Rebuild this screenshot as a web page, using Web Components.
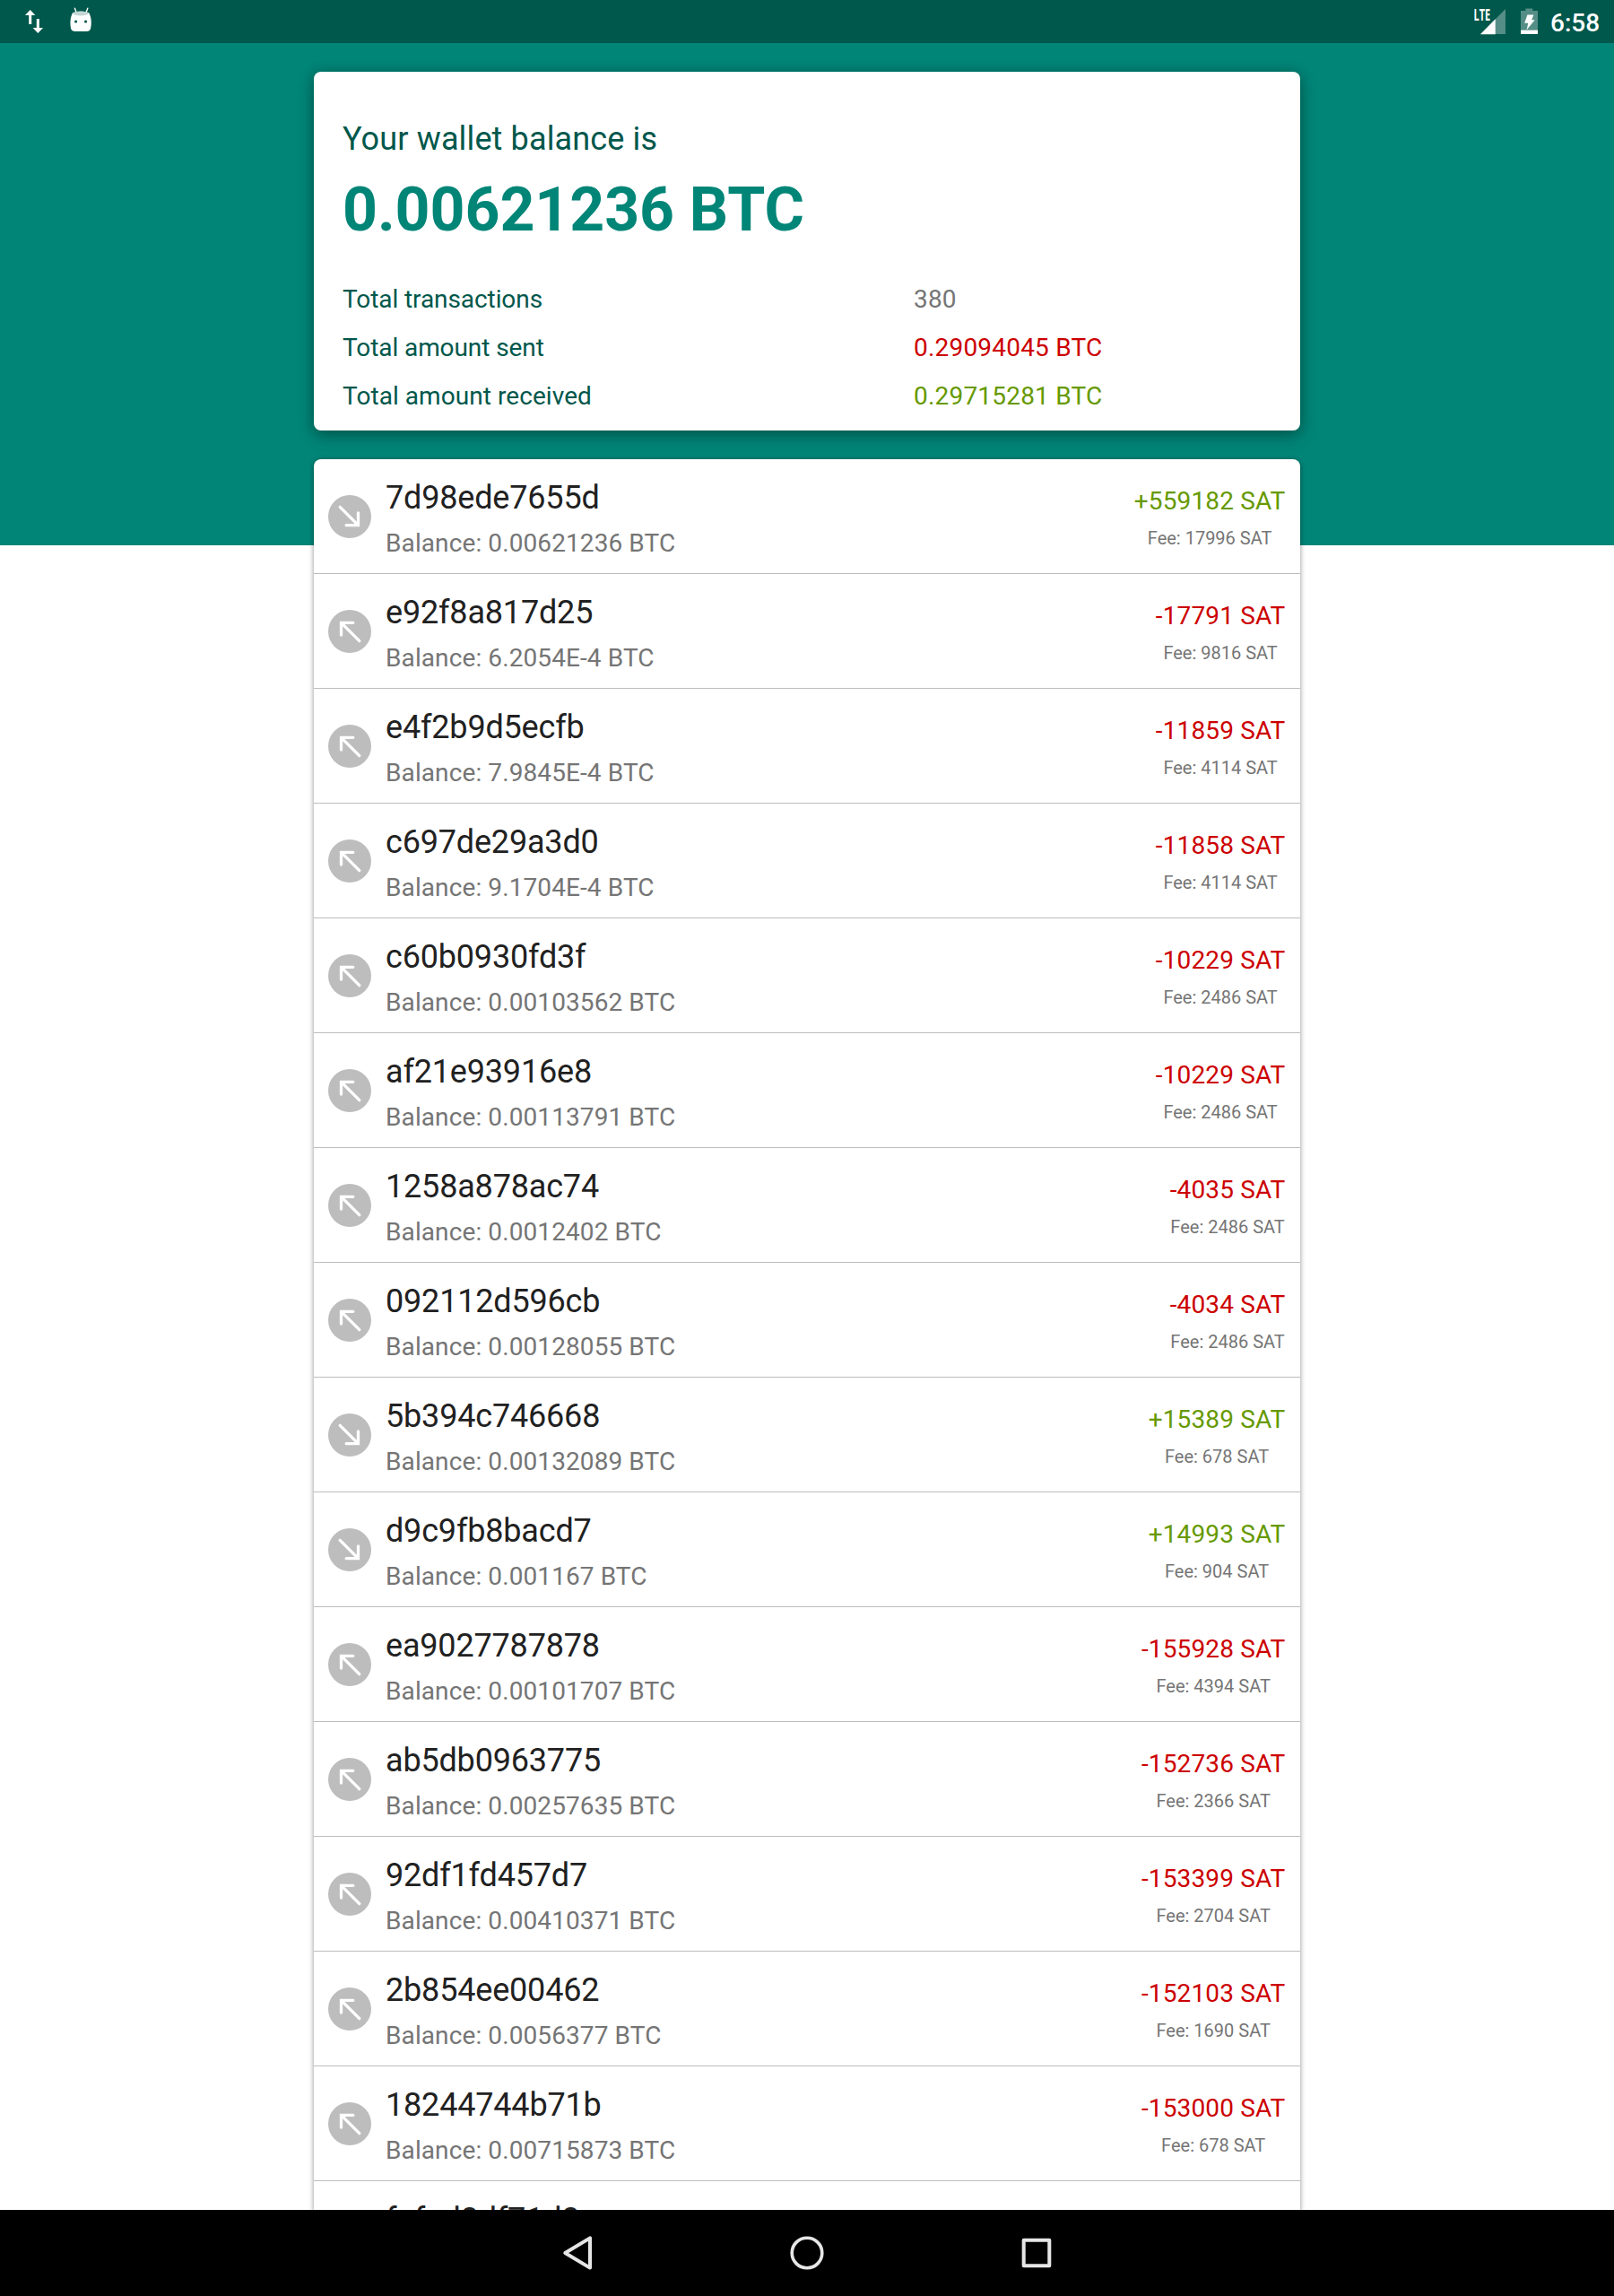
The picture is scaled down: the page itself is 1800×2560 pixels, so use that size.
<!DOCTYPE html>
<html lang="en">
<head>
<meta charset="utf-8">
<title>Wallet</title>
<style>
html,body{margin:0;height:2560px;overflow:hidden;background:#fff;font-family:Roboto,"Liberation Sans",sans-serif}
</style>
</head>
<body>
<wallet-app></wallet-app>
<script>
const define = (name, html, setup) => {
  const tpl = document.createElement('template');
  tpl.innerHTML = html;
  customElements.define(name, class extends HTMLElement {
    connectedCallback() {
      if (this.shadowRoot) return;
      this.attachShadow({mode: 'open'}).append(tpl.content.cloneNode(true));
      if (setup) setup(this, this.shadowRoot);
    }
  });
};

define('status-bar', `<style>
:host{display:flex;align-items:center;justify-content:space-between;height:48px;background:#00574b;color:#fff;flex:none}
svg{display:block;flex:none}
.side{display:flex;height:48px}
.time{font-size:28px;font-weight:500;line-height:48px;width:71px;padding-top:2px;box-sizing:border-box;flex:none}
</style>
<div class="side">
<svg width="140" height="48" viewBox="0 0 140 48" fill="#fff">
<path d="M28 17 L33.7 11 L39.4 17 H35.2 V27 H32.2 V17Z"/>
<path d="M36.6 31 H40.8 V21 H43.8 V31 H48 L42.3 37Z"/>
<path d="M85.4 14.5 L83.4 9.2 M95.8 14.5 L97.8 9.2" stroke="#fff" stroke-width="1.4" stroke-linecap="round"/>
<path d="M81 14.2 Q90 11.5 99.2 14.2 C102.3 20 102.2 27 101 32 Q100.2 35 96.5 35 H84 Q80 35 79.1 32 C78 27 78 20 81 14.2Z"/>
<ellipse cx="90" cy="14.9" rx="8.6" ry="2.5" fill="#c3d6d3"/>
<circle cx="84.6" cy="24" r="1.6" fill="#00574b"/><circle cx="95.6" cy="24" r="1.6" fill="#00574b"/>
</svg>
</div>
<div class="side">
<svg width="89" height="48" viewBox="0 0 89 48">
<text x="3.5" y="22.6" font-family="Open Sans, Roboto, sans-serif" font-size="17" font-weight="700" fill="#fff" textLength="18.5" lengthAdjust="spacingAndGlyphs">LTE</text>
<path d="M39 10 V38 H11Z" fill="#fff" opacity=".33"/>
<path d="M27.7 21.3 V38.3 H11Z" fill="#fff"/>
<path d="M61.3 9.5 h8 v2.6 h5.7 V33.5 H56 V12.1 h5.3Z" fill="#fff" opacity=".33"/>
<path d="M56 33.5 h19 v4.5 h-19Z" fill="#fff"/>
<path d="M63.4 16.5 H70.4 L68.2 22.3 H71.7 L62.5 33.5 L64.3 25.8 H60.2Z" fill="#fff"/>
</svg>
<span class="time">6:58</span>
</div>`);

define('stat-line', `<style>
:host{display:grid;grid-template-columns:637px 1fr;font-size:28px;line-height:33px;color:#00574b;height:33px}
.v{color:#757575;letter-spacing:.2px}
:host([tone]) .v{color:#c00}
:host([tone=received]) .v{color:#690}
</style><span><slot></slot></span><span class="v"></span>`,
(el, root) => root.querySelector('.v').textContent = el.getAttribute('value'));

define('balance-card', `<style>
:host{display:block;box-sizing:border-box;height:400px;background:#fff;border-radius:8px;padding:54px 32px 0;
box-shadow:0 7px 18px rgba(0,0,0,.26),0 0 14px rgba(0,0,0,.2)}
.label{font-size:36px;line-height:42px;color:#00574b;letter-spacing:.14px}
.amount{font-size:68px;line-height:80px;font-weight:700;color:#008577;margin-top:18px;letter-spacing:-.08px}
.stats{display:flex;flex-direction:column;gap:21px;margin-top:43px}
.tight{letter-spacing:-.08px}
.loose{letter-spacing:.06px}
</style>
<div class="label">Your wallet balance is</div>
<div class="amount">0.00621236 BTC</div>
<div class="stats">
<stat-line class="tight" value="380">Total transactions</stat-line>
<stat-line class="tight" value="0.29094045 BTC" tone="sent">Total amount sent</stat-line>
<stat-line class="loose" value="0.29715281 BTC" tone="received">Total amount received</stat-line>
</div>`);

define('direction-icon', `<style>
:host{display:block;width:48px;height:48px;flex:none}
svg{display:block}
:host([out]) g{transform:rotate(180deg);transform-origin:24px 24px}
</style><svg width="48" height="48" viewBox="0 0 48 48"><circle cx="24" cy="24" r="24" fill="#bdbdbd"/>
<g fill="none" stroke="#fff" stroke-width="3.3" stroke-linecap="round" stroke-linejoin="miter"><path d="M13.2 13.3 L33 33.2"/><path d="M20.2 33.7 H33.5 V20"/></g></svg>`);

define('tx-row', `<style>
:host{display:flex;align-items:center;box-sizing:border-box;height:128px;padding:0 16px;border-bottom:1px solid #bdbdbd;gap:16px;flex:none}
.main{flex:1;display:flex;flex-direction:column;gap:13px;padding-top:4px}
.hash{font-size:36px;line-height:42px;color:#212121;letter-spacing:-.18px}
.bal{font-size:28px;line-height:33px;color:#757575;letter-spacing:.1px}
.side{display:flex;flex-direction:column;align-items:center;gap:13px;padding:2px .6px 0 0}
.amt{font-size:28px;line-height:33px;color:#c00;letter-spacing:.14px}
.amt.in{color:#690}
.fee{font-size:20px;line-height:24px;color:#757575}
</style>
<direction-icon></direction-icon>
<div class="main"><div class="hash"></div><div class="bal"></div></div>
<div class="side"><div class="amt"></div><div class="fee"></div></div>`,
(el, root) => {
  const q = s => root.querySelector(s), amt = el.getAttribute('amount');
  q('.hash').textContent = el.getAttribute('hash');
  q('.bal').textContent = 'Balance: ' + el.getAttribute('balance') + ' BTC';
  q('.amt').textContent = amt + ' SAT';
  q('.fee').textContent = 'Fee: ' + el.getAttribute('fee') + ' SAT';
  if (amt[0] === '+') q('.amt').classList.add('in');
  else q('direction-icon').setAttribute('out', '');
});

const transactions = [
  ['7d98ede7655d','0.00621236','+559182','17996'],
  ['e92f8a817d25','6.2054E-4','-17791','9816'],
  ['e4f2b9d5ecfb','7.9845E-4','-11859','4114'],
  ['c697de29a3d0','9.1704E-4','-11858','4114'],
  ['c60b0930fd3f','0.00103562','-10229','2486'],
  ['af21e93916e8','0.00113791','-10229','2486'],
  ['1258a878ac74','0.0012402','-4035','2486'],
  ['092112d596cb','0.00128055','-4034','2486'],
  ['5b394c746668','0.00132089','+15389','678'],
  ['d9c9fb8bacd7','0.001167','+14993','904'],
  ['ea9027787878','0.00101707','-155928','4394'],
  ['ab5db0963775','0.00257635','-152736','2366'],
  ['92df1fd457d7','0.00410371','-153399','2704'],
  ['2b854ee00462','0.0056377','-152103','1690'],
  ['18244744b71b','0.00715873','-153000','678']
];

define('tx-list', `<style>
:host{display:flex;flex-direction:column;background:#fff;border-radius:8px 8px 0 0;flex:1;min-height:0;
box-shadow:0 2px 6px rgba(0,0,0,.32),0 0 4px rgba(0,0,0,.16)}
.rows{display:flex;flex-direction:column;overflow:hidden;border-radius:8px 8px 0 0;height:1952px}
.next{font-size:36px;line-height:42px;color:#212121;padding:21.5px 0 0 80px;flex:none;letter-spacing:-.18px}
</style><div class="rows"></div>`,
(el, root) => {
  const rows = root.querySelector('.rows');
  for (const [hash, balance, amount, fee] of transactions) {
    const r = document.createElement('tx-row');
    Object.entries({hash, balance, amount, fee}).forEach(([k, v]) => r.setAttribute(k, v));
    rows.append(r);
  }
  const next = document.createElement('div');
  next.className = 'next';
  next.textContent = 'fafad8df71d8';
  rows.append(next);
});

define('nav-bar', `<style>
:host{display:flex;align-items:center;justify-content:center;gap:160px;height:96px;background:#000;flex:none}
svg{display:block;width:96px;height:96px}
</style>
<svg viewBox="0 0 96 96" fill="none" stroke="#e6e6e6" stroke-width="4" stroke-linejoin="round"><path d="M34.3 48 L62 31.4 V64.6Z"/></svg>
<svg viewBox="0 0 96 96" fill="none" stroke="#e6e6e6" stroke-width="3.6"><circle cx="48" cy="48" r="16.8"/></svg>
<svg viewBox="0 0 96 96" fill="none" stroke="#e6e6e6" stroke-width="4" stroke-linejoin="round"><rect x="33.7" y="33.7" width="28.6" height="28.6"/></svg>`);

define('wallet-app', `<style>
:host{display:flex;flex-direction:column;width:1800px;height:2560px;overflow:hidden}
main{flex:1;min-height:0;box-sizing:border-box;padding:32px 350px 0;display:flex;flex-direction:column;gap:32px;overflow:hidden;
background:linear-gradient(#008577,#008577) 0 0/100% 560px no-repeat #fff}
</style>
<status-bar></status-bar>
<main><balance-card></balance-card><tx-list></tx-list></main>
<nav-bar></nav-bar>`);
</script>
</body>
</html>
